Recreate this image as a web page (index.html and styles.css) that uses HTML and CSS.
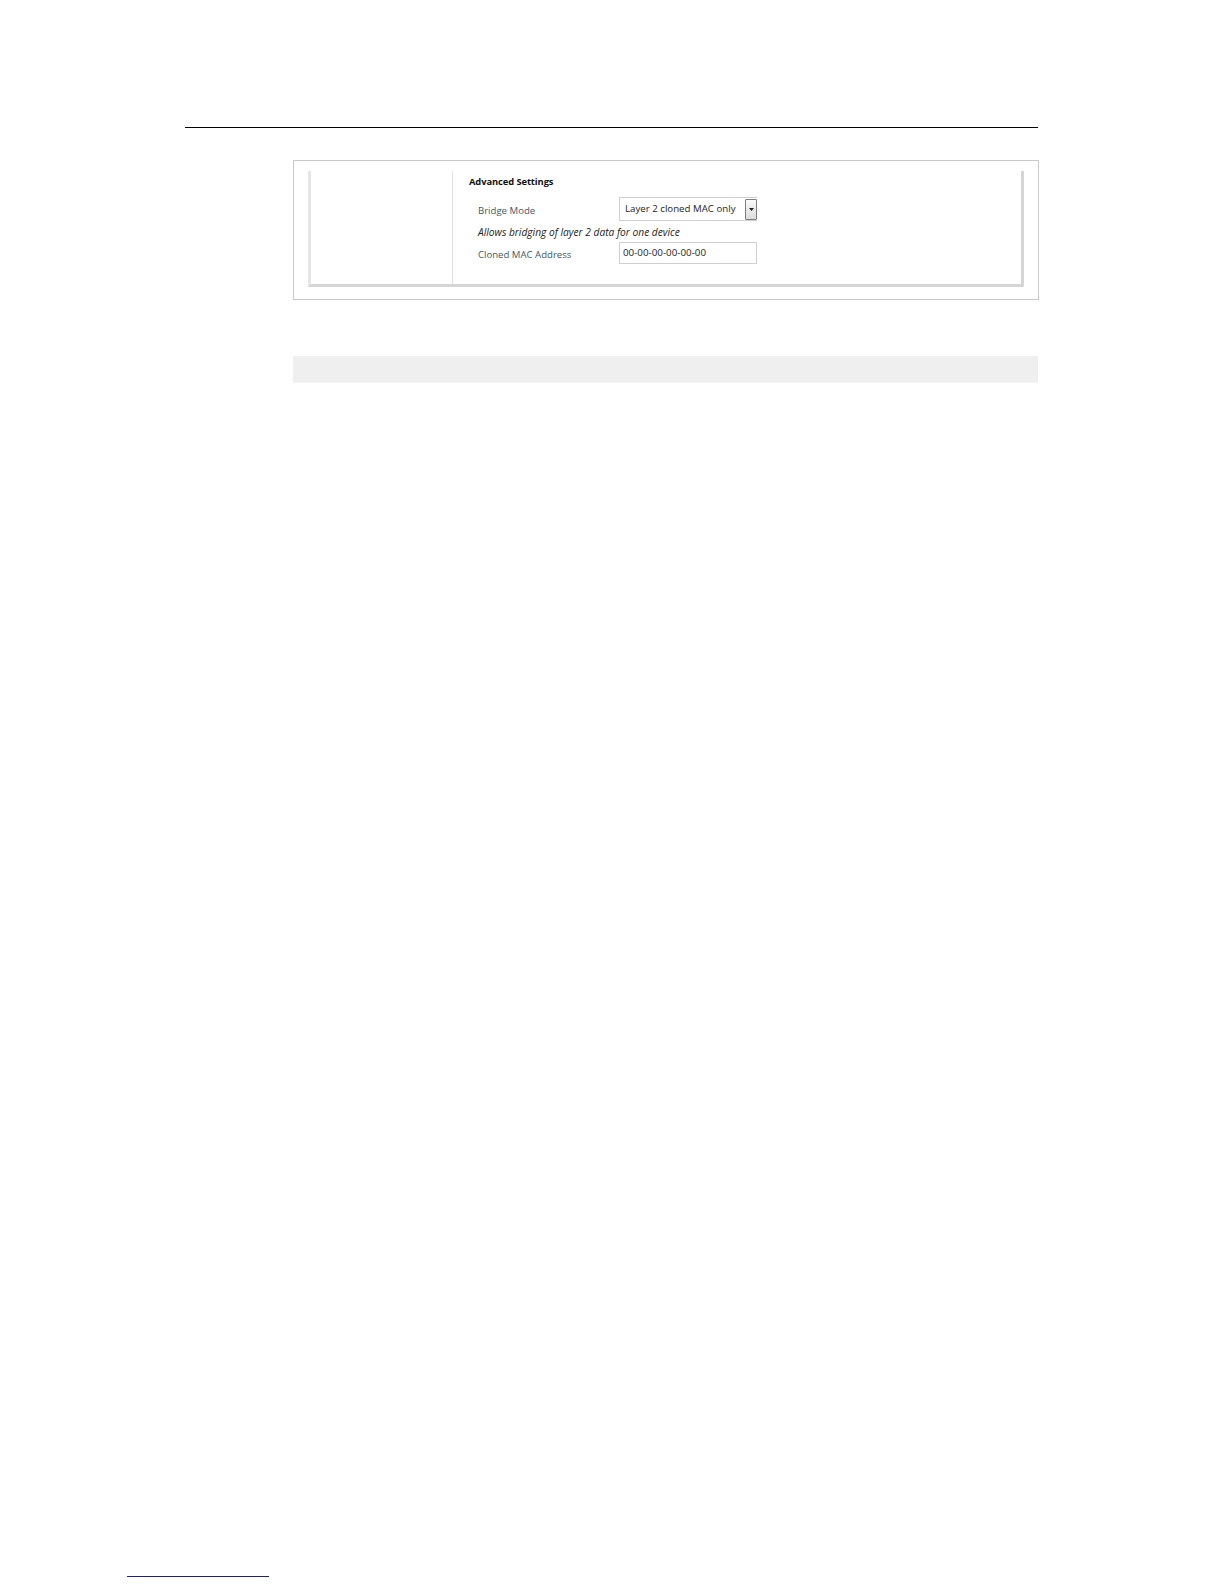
FILE: index.html
```html
<!DOCTYPE html>
<html lang="en">
<head>
<meta charset="utf-8">
<title>Advanced Settings</title>
<link rel="stylesheet" href="styles.css">
</head>
<body>
<div class="page">
  <div class="rule"></div>
  <div class="frame">
    <div class="panel">
      <div class="side"></div>
      <div class="main">
        <div class="title">Advanced Settings</div>
        <div class="row row-select">
          <div class="label">Bridge Mode</div>
          <div class="select">
            <span class="select-text">Layer 2 cloned MAC only</span>
            <span class="select-btn"><svg width="5" height="3" viewBox="0 0 5 3"><path d="M0 0H5L2.5 3Z" fill="#222"/></svg></span>
          </div>
        </div>
        <div class="desc">Allows bridging of layer 2 data for one device</div>
        <div class="row row-input">
          <div class="label">Cloned MAC Address</div>
          <div class="input">00-00-00-00-00-00</div>
        </div>
      </div>
    </div>
  </div>
  <div class="bar"></div>
  <div class="footrule"></div>
</div>
</body>
</html>
```

FILE: styles.css
```css
html, body {
  margin: 0;
  padding: 0;
  background: #ffffff;
}

.page {
  width: 1224px;
  height: 1584px;
  overflow: hidden;
  font-family: "Open Sans", "Noto Sans", sans-serif;
}

.rule {
  margin: 127px 0 0 185px;
  width: 853px;
  height: 1px;
  border-top: 1px solid #000;
}

.frame {
  box-sizing: border-box;
  margin: 31px 0 0 293px;
  width: 746px;
  height: 140px;
  border: 1px solid #c9c9c9;
  padding: 10px 14px 12px 14px;
}

.panel {
  box-sizing: border-box;
  height: 116px;
  display: flex;
  background: #fff;
  border-left: 3px solid #e6e6e6;
  border-right: 3px solid #d5d5d5;
  border-bottom: 3px solid #d5d5d5;
  border-bottom-right-radius: 2px;
}

.side {
  width: 141px;
  border-right: 1px solid #e3e3e3;
  flex: none;
}

.main {
  flex: 1;
  padding: 4px 0 0 16px;
  display: flex;
  flex-direction: column;
}

.title {
  font-size: 9.4px;
  font-weight: 700;
  line-height: 14px;
  color: #111;
  letter-spacing: -0.1px;
}

.row {
  display: flex;
  align-items: center;
  padding-left: 9px;
}

.row-select {
  margin-top: 8px;
  height: 24px;
}

.row-input {
  margin-top: 3px;
  height: 22px;
}

.label {
  width: 141px;
  flex: none;
  font-size: 9.6px;
  color: #3f5a68;
  line-height: 14px;
  padding-top: 3px;
}

.select {
  box-sizing: border-box;
  width: 138px;
  height: 24px;
  border: 1px solid #cfcfcf;
  border-right: none;
  display: flex;
  align-items: center;
  justify-content: space-between;
  padding-left: 5px;
}

.select-text {
  font-size: 9.7px;
  color: #1e1e1e;
  line-height: 14px;
}

.select-btn {
  box-sizing: border-box;
  width: 12px;
  height: 21px;
  border: 1px solid #7d7d7d;
  border-radius: 1px;
  background: linear-gradient(#fafafa, #dcdcdc);
  display: flex;
  align-items: center;
  justify-content: center;
}

.select-btn svg {
  display: block;
}

.desc {
  margin-top: 4px;
  padding-left: 9px;
  font-size: 10.2px;
  font-style: italic;
  line-height: 14px;
  color: #1e1e1e;
}

.input {
  box-sizing: border-box;
  width: 138px;
  height: 22px;
  border: 1px solid #cfcfcf;
  padding: 0 0 2px 3px;
  display: flex;
  align-items: center;
  font-size: 9.8px;
  color: #1e1e1e;
}

.bar {
  margin: 56px 0 0 293px;
  width: 745px;
  height: 26px;
  background: #efefef;
  border-bottom: 1px solid #f5f5f5;
}

.footrule {
  margin: 1193px 0 0 127px;
  width: 142px;
  height: 1px;
  background: #1c1c8a;
}
```
